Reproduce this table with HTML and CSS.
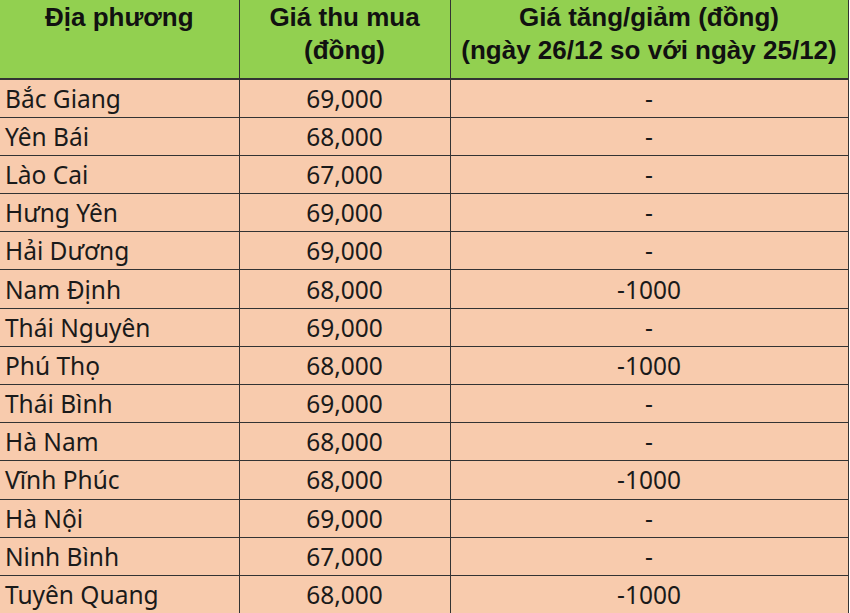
FILE: index.html
```html
<!DOCTYPE html>
<html lang="vi">
<head>
<meta charset="utf-8">
<link rel="stylesheet" href="styles.css">
</head>
<body>
<table class="price">
  <colgroup>
    <col class="c1"><col class="c2"><col class="c3">
  </colgroup>
  <thead>
    <tr>
      <th>Địa phương</th>
      <th>Giá thu mua<br>(đồng)</th>
      <th>Giá tăng/giảm (đồng)<br>(ngày 26/12 so với ngày 25/12)</th>
    </tr>
  </thead>
  <tbody>
    <tr><td class="name">Bắc Giang</td><td>69,000</td><td>-</td></tr>
    <tr><td class="name">Yên Bái</td><td>68,000</td><td>-</td></tr>
    <tr><td class="name">Lào Cai</td><td>67,000</td><td>-</td></tr>
    <tr><td class="name">Hưng Yên</td><td>69,000</td><td>-</td></tr>
    <tr><td class="name">Hải Dương</td><td>69,000</td><td>-</td></tr>
    <tr><td class="name">Nam Định</td><td>68,000</td><td>-1000</td></tr>
    <tr><td class="name">Thái Nguyên</td><td>69,000</td><td>-</td></tr>
    <tr><td class="name">Phú Thọ</td><td>68,000</td><td>-1000</td></tr>
    <tr><td class="name">Thái Bình</td><td>69,000</td><td>-</td></tr>
    <tr><td class="name">Hà Nam</td><td>68,000</td><td>-</td></tr>
    <tr><td class="name">Vĩnh Phúc</td><td>68,000</td><td>-1000</td></tr>
    <tr><td class="name">Hà Nội</td><td>69,000</td><td>-</td></tr>
    <tr><td class="name">Ninh Bình</td><td>67,000</td><td>-</td></tr>
    <tr><td class="name">Tuyên Quang</td><td>68,000</td><td>-1000</td></tr>
  </tbody>
</table>
</body>
</html>
```
FILE: styles.css
```css
html, body {
  margin: 0;
  padding: 0;
  background: #ffffff;
}
.price {
  border-collapse: collapse;
  table-layout: fixed;
  width: 848px;
}
.c1 { width: 239px; }
.c2 { width: 211px; }
.c3 { width: 398px; }
.price th {
  background: #92d050;
  color: #111;
  font-family: "Liberation Sans", Arial, sans-serif;
  font-weight: bold;
  font-size: 26px;
  line-height: 33px;
  height: 79px;
  padding: 1px 0 0 0;
  vertical-align: top;
  text-align: center;
  box-sizing: border-box;
  border-right: 1px solid #333;
  border-bottom: 2px solid #333;
}
.price td {
  background: #f8cbad;
  color: #1a1a1a;
  font-family: "Noto Sans", "Open Sans", sans-serif;
  font-size: 24.5px;
  height: 38.2px;
  padding: 0;
  text-align: center;
  vertical-align: middle;
  box-sizing: border-box;
  border-right: 1px solid #333;
  border-bottom: 1px solid #333;
}
.price td.name {
  text-align: left;
  padding-left: 5px;
}
```
